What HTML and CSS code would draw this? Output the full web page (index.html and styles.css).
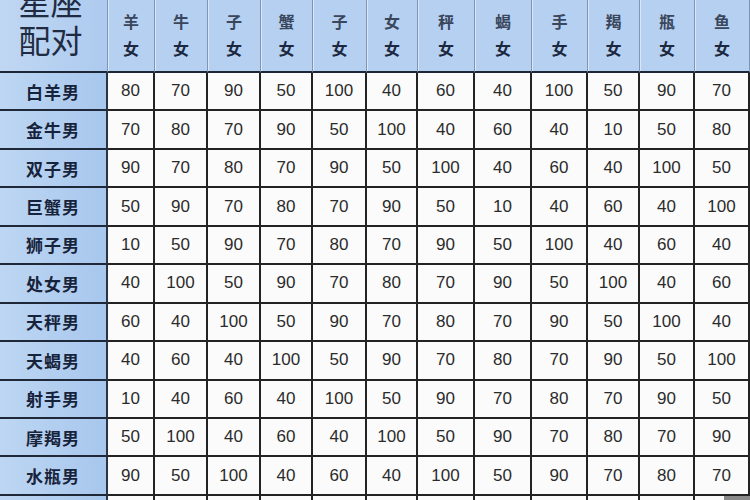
FILE: index.html
```html
<!DOCTYPE html>
<html lang="zh">
<head>
<meta charset="utf-8">
<title>星座配对</title>
<link rel="stylesheet" href="styles.css">
</head>
<body>
<div class="sheet">
  <div class="grid">
    <div class="hd corner"><span>星座<br>配对</span></div>
    <div class="hd col"><span>羊</span><span>女</span></div>
    <div class="hd col"><span>牛</span><span>女</span></div>
    <div class="hd col"><span>子</span><span>女</span></div>
    <div class="hd col"><span>蟹</span><span>女</span></div>
    <div class="hd col"><span>子</span><span>女</span></div>
    <div class="hd col"><span>女</span><span>女</span></div>
    <div class="hd col"><span>秤</span><span>女</span></div>
    <div class="hd col"><span>蝎</span><span>女</span></div>
    <div class="hd col"><span>手</span><span>女</span></div>
    <div class="hd col"><span>羯</span><span>女</span></div>
    <div class="hd col"><span>瓶</span><span>女</span></div>
    <div class="hd col"><span>鱼</span><span>女</span></div>

    <div class="rh">白羊男</div><div class="c">80</div><div class="c">70</div><div class="c">90</div><div class="c">50</div><div class="c">100</div><div class="c">40</div><div class="c">60</div><div class="c">40</div><div class="c">100</div><div class="c">50</div><div class="c">90</div><div class="c">70</div>
    <div class="rh">金牛男</div><div class="c">70</div><div class="c">80</div><div class="c">70</div><div class="c">90</div><div class="c">50</div><div class="c">100</div><div class="c">40</div><div class="c">60</div><div class="c">40</div><div class="c">10</div><div class="c">50</div><div class="c">80</div>
    <div class="rh">双子男</div><div class="c">90</div><div class="c">70</div><div class="c">80</div><div class="c">70</div><div class="c">90</div><div class="c">50</div><div class="c">100</div><div class="c">40</div><div class="c">60</div><div class="c">40</div><div class="c">100</div><div class="c">50</div>
    <div class="rh">巨蟹男</div><div class="c">50</div><div class="c">90</div><div class="c">70</div><div class="c">80</div><div class="c">70</div><div class="c">90</div><div class="c">50</div><div class="c">10</div><div class="c">40</div><div class="c">60</div><div class="c">40</div><div class="c">100</div>
    <div class="rh">狮子男</div><div class="c">10</div><div class="c">50</div><div class="c">90</div><div class="c">70</div><div class="c">80</div><div class="c">70</div><div class="c">90</div><div class="c">50</div><div class="c">100</div><div class="c">40</div><div class="c">60</div><div class="c">40</div>
    <div class="rh">处女男</div><div class="c">40</div><div class="c">100</div><div class="c">50</div><div class="c">90</div><div class="c">70</div><div class="c">80</div><div class="c">70</div><div class="c">90</div><div class="c">50</div><div class="c">100</div><div class="c">40</div><div class="c">60</div>
    <div class="rh">天秤男</div><div class="c">60</div><div class="c">40</div><div class="c">100</div><div class="c">50</div><div class="c">90</div><div class="c">70</div><div class="c">80</div><div class="c">70</div><div class="c">90</div><div class="c">50</div><div class="c">100</div><div class="c">40</div>
    <div class="rh">天蝎男</div><div class="c">40</div><div class="c">60</div><div class="c">40</div><div class="c">100</div><div class="c">50</div><div class="c">90</div><div class="c">70</div><div class="c">80</div><div class="c">70</div><div class="c">90</div><div class="c">50</div><div class="c">100</div>
    <div class="rh">射手男</div><div class="c">10</div><div class="c">40</div><div class="c">60</div><div class="c">40</div><div class="c">100</div><div class="c">50</div><div class="c">90</div><div class="c">70</div><div class="c">80</div><div class="c">70</div><div class="c">90</div><div class="c">50</div>
    <div class="rh">摩羯男</div><div class="c">50</div><div class="c">100</div><div class="c">40</div><div class="c">60</div><div class="c">40</div><div class="c">100</div><div class="c">50</div><div class="c">90</div><div class="c">70</div><div class="c">80</div><div class="c">70</div><div class="c">90</div>
    <div class="rh">水瓶男</div><div class="c">90</div><div class="c">50</div><div class="c">100</div><div class="c">40</div><div class="c">60</div><div class="c">40</div><div class="c">100</div><div class="c">50</div><div class="c">90</div><div class="c">70</div><div class="c">80</div><div class="c">70</div>
    <div class="rh"></div><div class="c"></div><div class="c"></div><div class="c"></div><div class="c"></div><div class="c"></div><div class="c"></div><div class="c"></div><div class="c"></div><div class="c"></div><div class="c"></div><div class="c"></div><div class="c"></div>
  </div>
  <div class="mark"></div>
</div>
</body>
</html>
```

FILE: styles.css
```css
html, body {
  margin: 0;
  padding: 0;
  background: #ffffff;
  overflow: hidden;
}

.sheet {
  position: relative;
  width: 750px;
  height: 500px;
  overflow: hidden;
}

.grid {
  display: grid;
  grid-template-columns: 108px 47px 53px 53px 52px 54px 51px 57px 57px 56px 52px 55px 55px;
  grid-template-rows: 73px repeat(12, 38.45px);
}

.grid > div {
  box-sizing: border-box;
  display: flex;
  align-items: center;
  justify-content: center;
}

.hd {
  background: #b5d0f1;
  border-bottom: 2px solid #1d2636;
  border-right: 1px solid #7f95b3;
  box-shadow: inset 1px 0 0 #dbe7f8;
  flex-direction: column;
  font-family: "Noto Sans CJK SC", sans-serif;
  color: #1c2840;
}

.corner {
  justify-content: flex-end !important;
  padding-bottom: 13px;
  font-size: 32px;
  line-height: 38px;
  font-weight: 400;
  color: #1f2b42;
  padding-right: 6px;
  box-shadow: none !important;
  background: linear-gradient(to right, #c0d7f3, #adcaee) !important;
}

.col {
  justify-content: flex-end !important;
  padding-bottom: 9px;
  font-size: 16px;
  line-height: 27px;
  font-weight: 700;
}

.col span:first-child {
  color: #39465c;
}

.rh {
  background: linear-gradient(to right, #bdd6f3, #a8c7ed);
  border-right: 2px solid #2b3444;
  border-bottom: 2px solid #1f2838;
  font-family: "Noto Sans CJK SC", sans-serif;
  font-weight: 700;
  font-size: 17px;
  letter-spacing: 1px;
  color: #17233a;
}

.c {
  background: #fbfbfb;
  border-right: 2px solid #232323;
  border-bottom: 2px solid #232323;
  font-family: "Liberation Sans", Arial, sans-serif;
  font-size: 17px;
  color: #2b2b2b;
}

.mark {
  position: absolute;
  left: 724px;
  top: 496px;
  width: 26px;
  height: 4px;
  background: #8a8a8a;
}
```
